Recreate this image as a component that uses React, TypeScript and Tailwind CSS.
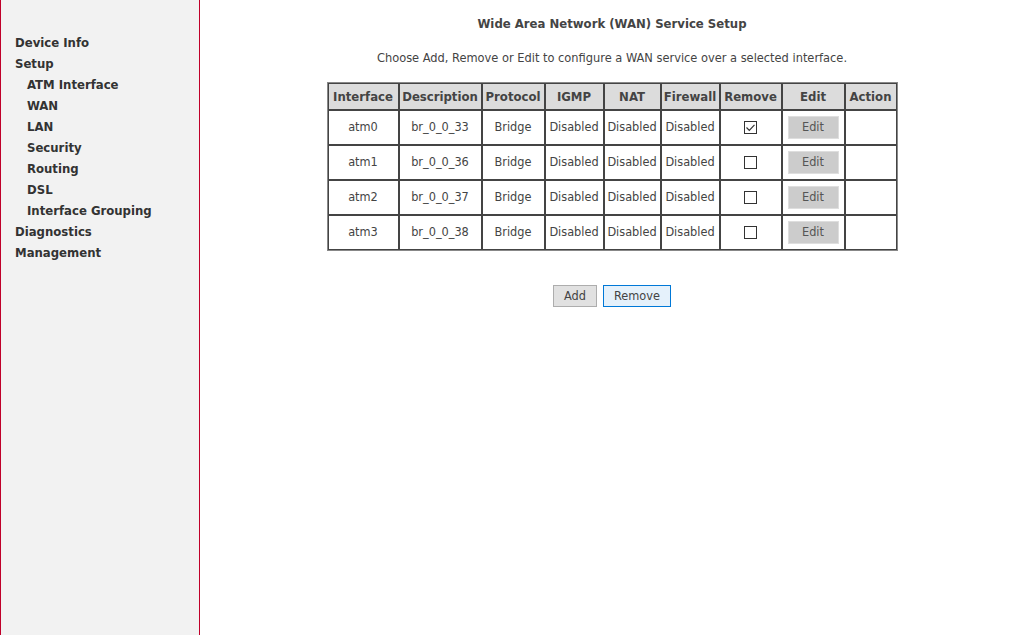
import React from "react";

const font = { fontFamily: "Tahoma, 'DejaVu Sans Condensed', 'DejaVu Sans', sans-serif" };

const rows = [
  { i: "atm0", d: "br_0_0_33", c: true },
  { i: "atm1", d: "br_0_0_36", c: false },
  { i: "atm2", d: "br_0_0_37", c: false },
  { i: "atm3", d: "br_0_0_38", c: false },
];

const widths = [72, 83, 63, 59, 57, 59, 62, 63, 53];
const heads = ["Interface", "Description", "Protocol", "IGMP", "NAT", "Firewall", "Remove", "Edit", "Action"];

function Check({ on }: { on: boolean }) {
  return (
    <span className="inline-flex items-center justify-center w-[13px] h-[13px] border border-[#333] bg-white align-middle">
      {on && (
        <svg width="11" height="11" viewBox="0 0 11 11">
          <path d="M1.5 5.5 L4.3 8.3 L9.5 2.8" fill="none" stroke="#333" strokeWidth="1.2" />
        </svg>
      )}
    </span>
  );
}

export default function App() {
  const side = [
    { t: "Device Info", s: false },
    { t: "Setup", s: false },
    { t: "ATM Interface", s: true },
    { t: "WAN", s: true },
    { t: "LAN", s: true },
    { t: "Security", s: true },
    { t: "Routing", s: true },
    { t: "DSL", s: true },
    { t: "Interface Grouping", s: true },
    { t: "Diagnostics", s: false },
    { t: "Management", s: false },
  ];
  return (
    <div className="flex w-[1024px] h-[635px] bg-white text-[#444] overflow-hidden" style={font}>
      <div className="w-[200px] shrink-0 h-full bg-[#f2f2f2] border-l border-r border-[#c0002a] pt-[32px]">
        {side.map((x) => (
          <div
            key={x.t}
            className={`h-[21px] leading-[21px] text-[13px] font-bold text-[#333] ${x.s ? "pl-[26px]" : "pl-[14px]"}`}
          >
            {x.t}
          </div>
        ))}
      </div>
      <div className="flex-1 flex flex-col items-center">
        <div className="mt-[15px] h-[18px] leading-[18px] text-[13px] font-bold text-[#444]">
          Wide Area Network (WAN) Service Setup
        </div>
        <div className="mt-[16px] h-[18px] leading-[18px] text-[12.7px] text-[#444]">
          Choose Add, Remove or Edit to configure a WAN service over a selected interface.
        </div>
        <table
          className="mt-[15px] border-separate border-spacing-0 border border-[#888] text-[12.6px]"
          style={{ tableLayout: "fixed", width: 571 }}
        >
          <colgroup>
            {widths.map((w, k) => (
              <col key={k} style={{ width: k === 0 ? w - 1 : k === widths.length - 1 ? w - 1 : w }} />
            ))}
          </colgroup>
          <thead>
            <tr>
              {heads.map((h) => (
                <th key={h} className="h-[27px] p-0 border border-[#444] bg-[#dcdcdc] text-[13px] font-bold text-[#444] text-center">
                  {h}
                </th>
              ))}
            </tr>
          </thead>
          <tbody>
            {rows.map((r) => (
              <tr key={r.i}>
                <td className="h-[35px] p-0 border border-[#444] text-center">{r.i}</td>
                <td className="p-0 border border-[#444] text-center">{r.d}</td>
                <td className="p-0 border border-[#444] text-center">Bridge</td>
                <td className="p-0 border border-[#444] text-center">Disabled</td>
                <td className="p-0 border border-[#444] text-center">Disabled</td>
                <td className="p-0 border border-[#444] text-center">Disabled</td>
                <td className="p-0 border border-[#444] text-center">
                  <Check on={r.c} />
                </td>
                <td className="p-0 border border-[#444] text-center">
                  <span className="inline-flex items-center justify-center w-[51px] h-[23px] bg-[#cccccc] border border-[#dedede] text-[12.6px] text-[#555]">
                    Edit
                  </span>
                </td>
                <td className="p-0 border border-[#444]"></td>
              </tr>
            ))}
          </tbody>
        </table>
        <div className="mt-[34px] flex gap-[6px] text-[12.6px]">
          <span className="inline-flex items-center justify-center w-[44px] h-[22px] bg-[#e1e1e1] border border-[#adadad] text-[#444]">
            Add
          </span>
          <span className="inline-flex items-center justify-center w-[68px] h-[22px] bg-[#e5f1fb] border border-[#0078d7] text-[#444]">
            Remove
          </span>
        </div>
      </div>
    </div>
  );
}
